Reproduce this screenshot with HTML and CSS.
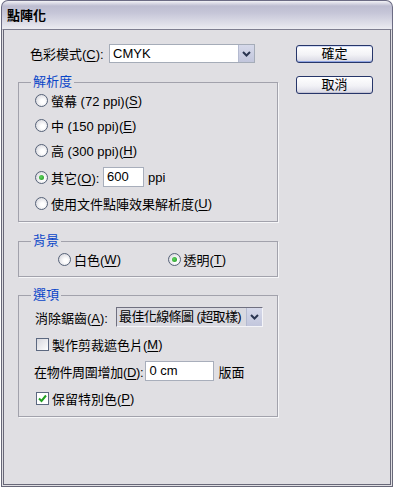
FILE: index.html
```html
<!DOCTYPE html>
<html lang="zh-Hant">
<head>
    <meta charset="UTF-8">
    <meta name="viewport" content="width=device-width, initial-scale=1.0">
    <title>點陣化</title>
    <link rel="stylesheet" href="styles.css">
</head>
<body>
    <div class="window">
        <div class="titlebar">點陣化</div>
        <div class="frame">
            <div class="main">
                <div class="row top-row">
                    <span class="label label-mode">色彩模式(<u>C</u>):</span>
                    <div class="combo combo-mode">
                        <span class="combo-text">CMYK</span>
                        <span class="combo-btn">
                            <svg width="9" height="6" viewBox="0 0 9 6"><polyline points="1,1 4.5,4.5 8,1" fill="none" stroke="#2a3550" stroke-width="2"/></svg>
                        </span>
                    </div>
                </div>

                <fieldset class="group group-res">
                    <legend>解析度</legend>
                    <div class="opt"><span class="radio"></span>螢幕 (72 ppi)(<u>S</u>)</div>
                    <div class="opt"><span class="radio"></span>中 (150 ppi)(<u>E</u>)</div>
                    <div class="opt"><span class="radio"></span>高 (300 ppi)(<u>H</u>)</div>
                    <div class="opt opt-other">
                        <span class="radio on"></span>
                        <span class="label label-other">其它(<u>O</u>):</span>
                        <span class="field field-ppi">600</span>
                        <span class="unit">ppi</span>
                    </div>
                    <div class="opt opt-last"><span class="radio"></span>使用文件點陣效果解析度(<u>U</u>)</div>
                </fieldset>

                <fieldset class="group group-bg">
                    <legend>背景</legend>
                    <div class="bg-row">
                        <div class="opt"><span class="radio"></span>白色(<u>W</u>)</div>
                        <div class="opt"><span class="radio on"></span>透明(<u>T</u>)</div>
                    </div>
                </fieldset>

                <fieldset class="group group-opts">
                    <legend>選項</legend>
                    <div class="opt">
                        <span class="label label-aa">消除鋸齒(<u>A</u>):</span>
                        <div class="combo combo-aa">
                            <span class="combo-text">最佳化線條圖 (超取樣)</span>
                            <span class="combo-btn">
                                <svg width="9" height="6" viewBox="0 0 9 6"><polyline points="1,1 4.5,4.5 8,1" fill="none" stroke="#2a3550" stroke-width="2"/></svg>
                            </span>
                        </div>
                    </div>
                    <div class="opt opt-gap"><span class="check"></span>製作剪裁遮色片(<u>M</u>)</div>
                    <div class="opt opt-gap">
                        <span class="label label-pad">在物件周圍增加(<u>D</u>):</span>
                        <span class="field field-pad">0 cm</span>
                        <span class="unit">版面</span>
                    </div>
                    <div class="opt opt-gap">
                        <span class="check on">
                            <svg width="11" height="11" viewBox="0 0 11 11"><polyline points="2,5.5 4.5,8 9,2.5" fill="none" stroke="#21a121" stroke-width="2"/></svg>
                        </span>保留特別色(<u>P</u>)
                    </div>
                </fieldset>
            </div>

            <div class="buttons">
                <button class="btn btn-default">確定</button>
                <button class="btn">取消</button>
            </div>
        </div>
    </div>
</body>
</html>
```

FILE: styles.css
```css
body {
  margin: 0;
  background: #fff;
  font-family: "Liberation Sans", "Noto Sans CJK TC", sans-serif;
  font-size: 13px;
  color: #000;
}

u {
  text-decoration: underline;
  text-underline-offset: 2px;
}

.window {
  width: 393px;
  height: 487px;
  display: flex;
  flex-direction: column;
  padding-left: 1px;
  box-sizing: border-box;
}

.titlebar {
  height: 29px;
  box-sizing: border-box;
  padding: 2px 0 0 5px;
  line-height: 26px;
  font-size: 13px;
  font-weight: 700;
  border: 1px solid #6c6c84;
  border-bottom: none;
  border-radius: 7px 7px 0 0;
  background: linear-gradient(#f2f2f6 0, #bdbdd0 5px, #c6c6d8 12px, #e4e4ec 25px, #eeeef3 29px);
}

.frame {
  flex: 1;
  display: flex;
  background: #e0dfe3;
  border: 3px double #686878;
  border-top: 1px solid #7e7e90;
  padding: 14px 0 0 14px;
}

.main {
  width: 260px;
  display: flex;
  flex-direction: column;
}

.row {
  display: flex;
  align-items: center;
}

.top-row {
  height: 19px;
  padding-left: 12px;
}

.label {
  flex: none;
  white-space: nowrap;
}

.label-mode {
  width: 79px;
}

.combo {
  display: flex;
  height: 19px;
  box-sizing: border-box;
  border: 1px solid #a5acb8;
  background: #fff;
}

.combo-mode {
  width: 146px;
}

.combo-text {
  flex: 1;
  padding-left: 3px;
  line-height: 17px;
  white-space: nowrap;
  overflow: hidden;
}

.combo-btn {
  flex: none;
  width: 15px;
  display: flex;
  align-items: center;
  justify-content: center;
  background: linear-gradient(#d6d9ea, #c2c6dc);
  border-left: 1px solid #b4bad0;
}

.combo-aa {
  flex: none;
  width: 147px;
  height: 20px;
  background: #d9d9e0;
  border-color: #707080 #f4f4f8 #f4f4f8 #707080;
}

.combo-aa .combo-text {
  padding-left: 2px;
  line-height: 18px;
  letter-spacing: -0.6px;
}

.group {
  margin: 12px 0 0;
  padding: 1px 0 8px 16px;
  border: 1px solid #a2a2ac;
  box-shadow: 1px 1px 0 #f6f6f8;
  min-inline-size: 0;
}

.group legend {
  padding: 0 2px;
  margin-left: -4px;
  line-height: 14px;
  color: #0a46c8;
}

.opt {
  display: flex;
  align-items: center;
  height: 20px;
  white-space: nowrap;
}

.opt + .opt {
  margin-top: 5px;
}

.group-res .opt-other {
  margin-top: 7px;
}

.group-res .opt-last {
  margin-top: 6px;
}

.radio {
  flex: none;
  width: 13px;
  height: 13px;
  box-sizing: border-box;
  border: 1px solid #566278;
  border-radius: 50%;
  margin-right: 3px;
  background: radial-gradient(circle at 60% 60%, #ffffff 20%, #e6e6ea 60%, #c8c8d0 100%);
  display: flex;
  align-items: center;
  justify-content: center;
}

.radio.on::after {
  content: "";
  width: 5px;
  height: 5px;
  border-radius: 50%;
  background: radial-gradient(circle at 40% 40%, #5fd35f, #1c941c);
}

.label-other {
  width: 52px;
}

.field {
  display: block;
  flex: none;
  height: 20px;
  box-sizing: border-box;
  border: 1px solid #a8aebb;
  background: #fff;
  padding-left: 3px;
  line-height: 18px;
}

.field-ppi {
  width: 41px;
}

.unit {
  margin-left: 4px;
}

.group-bg {
  margin-top: 12px;
  padding-top: 2px;
  padding-left: 39px;
}

.group-bg legend {
  margin-left: -27px;
}

.bg-row {
  display: flex;
}

.bg-row .opt {
  width: 121px;
  height: 18px;
}

.bg-row .opt + .opt {
  margin-top: 0;
}

.group-opts {
  margin-top: 11px;
  padding-top: 5px;
}

.group-opts .opt-gap {
  margin-top: 7px;
}

.label-aa {
  width: 81px;
}

.check {
  flex: none;
  width: 13px;
  height: 13px;
  box-sizing: border-box;
  margin: 0 3px 0 1px;
  border: 1px solid #5c6880;
  background: linear-gradient(135deg, #d8d8de, #f2f2f4 70%, #fff);
  display: flex;
  align-items: center;
  justify-content: center;
}

.check.on {
  background: #fff;
}

.label-pad {
  margin-left: -1px;
  margin-right: 2px;
  letter-spacing: -0.3px;
}

.field-pad {
  width: 69px;
}

.buttons {
  display: flex;
  flex-direction: column;
  margin-left: 18px;
  padding-top: 1px;
}

.btn {
  width: 77px;
  height: 18px;
  padding: 0;
  font-family: inherit;
  font-size: 13px;
  line-height: 16px;
  color: #000;
  border: 1px solid #27366a;
  border-radius: 3px;
  background: linear-gradient(#ffffff, #f2f2f6 55%, #d8d8e4);
  box-shadow: inset 0 -1px 0 #c4c4d4;
}

.btn + .btn {
  margin-top: 13px;
}

.btn-default {
  box-shadow: inset 0 -1px 0 #8fa4e2, inset 0 1px 0 #d2dcf6;
}
```
